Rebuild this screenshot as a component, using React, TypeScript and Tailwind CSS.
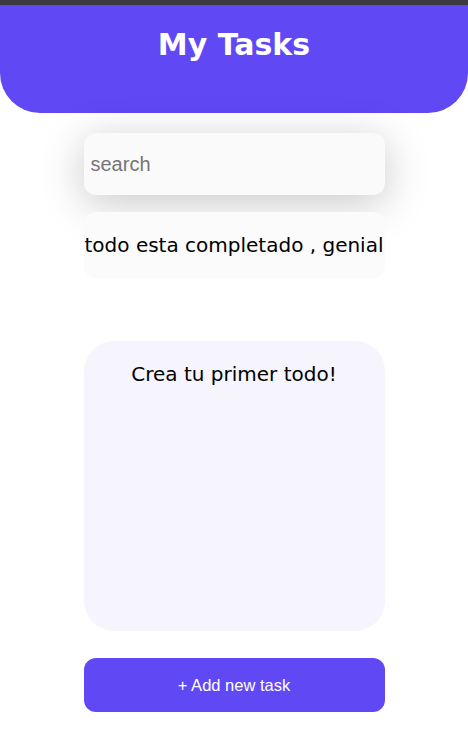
import React from "react";

export default function App() {
  return (
    <div className="min-h-[756px] bg-white flex flex-col items-center">
      <div className="w-full h-[5px] bg-[#3b3a3e]" />
      <header className="w-full h-[108px] bg-[#6048f5] rounded-b-[40px] flex justify-center">
        <h1 className="mt-[21px] text-[30px] leading-[38px] font-bold text-white font-['DejaVu_Sans',sans-serif]">
          My Tasks
        </h1>
      </header>
      <input
        placeholder="search"
        className="mt-[20px] w-[301px] h-[62px] rounded-[12px] bg-[#fafafa] pl-[7px] pr-[6px] text-[20px] font-['Liberation_Sans',Arial,sans-serif] placeholder:text-[#757575] outline-none shadow-[0_8px_44px_rgba(0,0,0,0.22)]"
      />
      <div className="mt-[17px] w-[301px] h-[66px] rounded-[12px] bg-[#fbfbfb] flex items-center justify-center whitespace-nowrap">
        <p className="text-[20px] leading-[26px] text-black font-['DejaVu_Sans',sans-serif]">
          todo esta completado , genial
        </p>
      </div>
      <section className="mt-[63px] w-[301px] h-[290px] rounded-[30px] bg-[#f6f5fe] flex justify-center">
        <p className="mt-[20px] h-[26px] text-[20px] leading-[26px] text-black font-['DejaVu_Sans',sans-serif]">
          Crea tu primer todo!
        </p>
      </section>
      <button className="mt-[27px] w-[301px] h-[54px] rounded-[12px] bg-[#6048f5] text-white text-[16.5px] font-['Liberation_Sans',Arial,sans-serif]">
        + Add new task
      </button>
    </div>
  );
}
